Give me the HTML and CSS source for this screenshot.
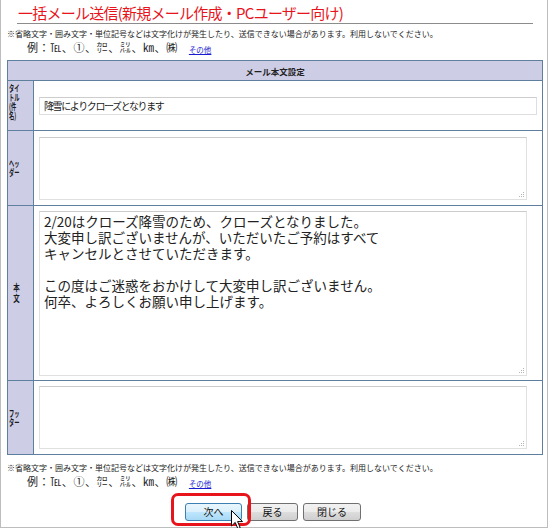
FILE: index.html
```html
<!DOCTYPE html>
<html lang="ja">
<head>
<meta charset="utf-8">
<link rel="stylesheet" href="styles.css">
</head>
<body>
<div class="frame">
  <h1 class="title">一括メール送信(新規メール作成・PCユーザー向け)</h1>
  <p class="notice">※省略文字・囲み文字・単位記号などは文字化けが発生したり、送信できない場合があります。利用しないでください。</p>
  <p class="example">例：℡、①、㌍、㍊、㎞、㈱ <a class="more" href="#">その他</a></p>

  <table class="form">
    <tr class="r-head"><th colspan="2" class="head">メール本文設定</th></tr>
    <tr class="r-subject">
      <th class="label label-top"><span class="lt">タイ<br>トル<br>(件<br>名)</span></th>
      <td class="field"><input class="subject" type="text" value="降雪によりクローズとなります"></td>
    </tr>
    <tr class="r-header">
      <th class="label"><span class="lt">ヘッ<br>ダー</span></th>
      <td class="field"><div class="wrap"><textarea class="area area-small"></textarea></div></td>
    </tr>
    <tr class="r-body">
      <th class="label label-center"><span class="lt lt-center">本<br>文</span></th>
      <td class="field"><div class="wrap"><textarea class="area area-body">2/20はクローズ降雪のため、クローズとなりました。
大変申し訳ございませんが、いただいたご予約はすべて
キャンセルとさせていただきます。

この度はご迷惑をおかけして大変申し訳ございません。
何卒、よろしくお願い申し上げます。</textarea></div></td>
    </tr>
    <tr class="r-footer">
      <th class="label"><span class="lt">フッ<br>ター</span></th>
      <td class="field"><div class="wrap"><textarea class="area area-small"></textarea></div></td>
    </tr>
  </table>

  <p class="notice notice-bottom">※省略文字・囲み文字・単位記号などは文字化けが発生したり、送信できない場合があります。利用しないでください。</p>
  <p class="example">例：℡、①、㌍、㍊、㎞、㈱ <a class="more" href="#">その他</a></p>

  <div class="buttons">
    <span class="hl">
      <button class="btn btn-hover" type="button">次へ</button>
      <svg class="cursor" width="13" height="20" viewBox="0 0 13 20"><path d="M0.5 0.5 L0.5 16 L4.2 12.4 L6.8 18.6 L9.2 17.6 L6.6 11.6 L11.5 11.6 Z" fill="#fff" stroke="#000" stroke-width="1" stroke-linejoin="round"/></svg>
    </span>
    <button class="btn btn-back" type="button">戻る</button>
    <button class="btn btn-close" type="button">閉じる</button>
  </div>
</div>
</body>
</html>
```

FILE: styles.css
```css
html, body {
  margin: 0;
  padding: 0;
  background: #fff;
}

body {
  font-family: "Noto Sans CJK JP", "Noto Sans", sans-serif;
  color: #222;
}

.frame {
  width: 548px;
  height: 528px;
  box-sizing: border-box;
  border: 1px solid #bdbdbd;
  border-top: 0;
  position: relative;
}

.title {
  margin: 0 0 0 16px;
  width: 515px;
  height: 20px;
  padding: 3px 0 0 1px;
  border-bottom: 1px solid #8c8c8c;
  font-size: 15px;
  font-weight: normal;
  line-height: 20px;
  letter-spacing: -0.75px;
  color: #e8141c;
  white-space: nowrap;
}

.notice {
  margin: 5px 0 0 6px;
  font-size: 8px;
  line-height: 10px;
  color: #222;
  white-space: nowrap;
}

.notice-bottom {
  margin-top: 8px;
}

.example {
  margin: 2px 0 0 26px;
  font-size: 11px;
  line-height: 13px;
  letter-spacing: 0.6px;
  color: #222;
  white-space: nowrap;
}

.more {
  font-size: 7.5px;
  letter-spacing: 0;
  color: #1a1ad0;
  text-decoration: underline;
  margin-left: 8px;
  vertical-align: -1px;
}

.form {
  margin: 4px 0 0 6px;
  width: 536px;
  border-collapse: collapse;
  border: 1px solid #56779a;
}

.form th, .form td {
  border: 1px solid #5f7f9f;
  padding: 0;
}

.head {
  height: 19px;
  background: #cdcde6;
  font-size: 8.5px;
  font-weight: bold;
  color: #222;
  text-align: center;
  vertical-align: middle;
}

.label {
  width: 26px;
  background: #cdcde6;
  font-size: 9px;
  line-height: 9px;
  font-weight: bold;
  color: #1a1a1a;
  text-align: left;
  vertical-align: middle;
  padding: 0 0 0 1px !important;
  box-sizing: border-box;
}

.label-top {
  vertical-align: top;
  padding-top: 3px !important;
}

.label-center {
  text-align: center;
  padding-right: 9px !important;
}

.lt {
  display: inline-block;
  transform: scaleX(0.58);
  transform-origin: left center;
  white-space: nowrap;
}

.lt-center {
  transform: scaleX(0.72);
  transform-origin: center center;
  line-height: 11px;
}

.r-subject { height: 50px; }
.r-header { height: 75px; }
.r-body { height: 175px; }
.r-footer { height: 74px; }

.field {
  background: #fff;
  vertical-align: middle;
  padding: 0 0 0 5px !important;
}

.subject {
  display: block;
  width: 498px;
  height: 18px;
  box-sizing: border-box;
  border: 1px solid #dedede;
  border-top-color: #cdcdcd;
  padding: 0 4px;
  font-family: "Noto Sans CJK JP", sans-serif;
  font-size: 10px;
  letter-spacing: -1.4px;
  color: #222;
  background: #fff;
}

.wrap {
  position: relative;
  width: 488px;
}

.wrap::after {
  content: "";
  position: absolute;
  right: 3px;
  bottom: 3px;
  width: 1px;
  height: 1px;
  background: #b4b4b4;
  box-shadow: -2px 0 #b4b4b4, -4px 0 #b4b4b4, 0 -2px #b4b4b4, 0 -4px #b4b4b4, -2px -2px #b4b4b4;
}

.area {
  display: block;
  width: 488px;
  box-sizing: border-box;
  border: 1px solid #e0e0e0;
  border-top-color: #cbcbcb;
  padding: 1px 4px;
  margin: 0;
  font-family: "Noto Sans CJK JP", sans-serif;
  color: #222;
  background: #fff;
  resize: none;
  overflow: hidden;
}

.area-small {
  height: 63px;
}

.area-body {
  height: 165px;
  font-size: 13.5px;
  line-height: 16px;
}

.buttons {
  margin-top: 13px;
  display: flex;
  justify-content: center;
  gap: 5px;
  padding-right: 2px;
}

.hl {
  position: relative;
  display: inline-block;
}

.hl::after {
  content: "";
  position: absolute;
  left: -14px;
  right: -9px;
  top: -10px;
  bottom: -5px;
  border: 3px solid #e8141c;
  border-radius: 7px;
  pointer-events: none;
}

.cursor {
  position: absolute;
  left: 46px;
  top: 7px;
  z-index: 2;
}

.btn {
  display: block;
  height: 18px;
  box-sizing: border-box;
  border: 1px solid #707070;
  border-radius: 3px;
  background: linear-gradient(#f2f2f2 0%, #ebebeb 50%, #dddddd 51%, #cfcfcf 100%);
  font-family: "Noto Sans CJK JP", sans-serif;
  font-size: 10px;
  line-height: 16px;
  padding: 0;
  color: #111;
}

.btn-hover {
  width: 57px;
  border-color: #3c7fb1;
  background: linear-gradient(#eaf6fd 0%, #d9f0fc 50%, #bee6fd 51%, #a7d9f5 100%);
}

.btn-back { width: 51px; }
.btn-close { width: 58px; }
```
